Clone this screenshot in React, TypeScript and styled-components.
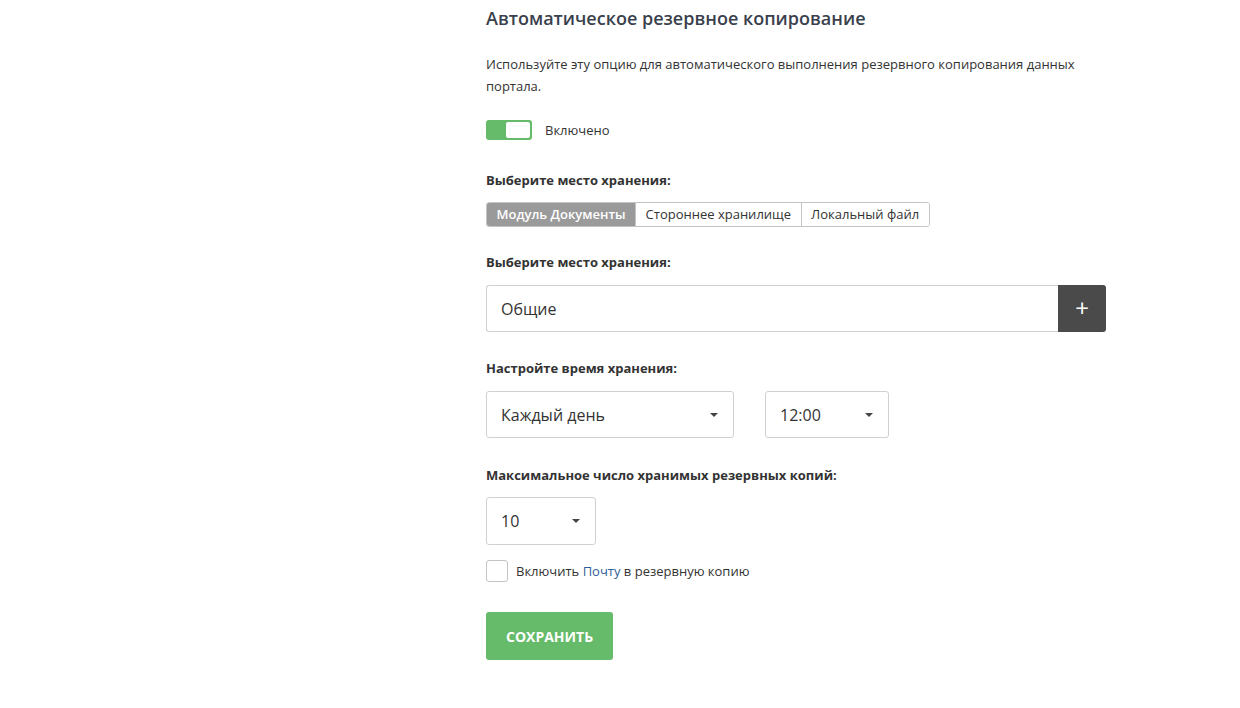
import React from "react";
import styled, { createGlobalStyle } from "styled-components";

const Global = createGlobalStyle`
  html, body { margin: 0; padding: 0; background: #fff; }
  body { font-family: "Open Sans", "Noto Sans", sans-serif; color: #333; }
  * { box-sizing: border-box; }
`;

const Page = styled.div`
  width: 1240px;
  height: 708px;
  padding: 6px 0 0 486px;
  overflow: hidden;
`;

const Column = styled.div`
  width: 620px;
  display: flex;
  flex-direction: column;
  align-items: flex-start;
`;

const Title = styled.h1`
  margin: 0;
  font-size: 18px;
  line-height: 24px;
  font-weight: 600;
  color: #3a3f4d;
`;

const Description = styled.p`
  margin: 23px 0 0;
  font-size: 13px;
  line-height: 22px;
  color: #333;
  width: 600px;
`;

const ToggleRow = styled.label`
  margin-top: 23px;
  display: flex;
  align-items: center;
  gap: 13px;
  font-size: 13px;
  line-height: 20px;
  color: #333;
`;

const Toggle = styled.span<{ $on: boolean }>`
  width: 46px;
  height: 20px;
  border-radius: 3px;
  background: ${(p) => (p.$on ? "#66bb6a" : "#ccc")};
  display: flex;
  justify-content: ${(p) => (p.$on ? "flex-end" : "flex-start")};
  padding: 2px;
`;

const Knob = styled.span`
  width: 24px;
  height: 16px;
  background: #fff;
  border-radius: 2px;
`;

const Label = styled.div<{ $top: number }>`
  margin-top: ${(p) => p.$top}px;
  font-size: 13px;
  line-height: 20px;
  font-weight: 700;
  color: #333;
`;

const Segmented = styled.div`
  margin-top: 12px;
  display: flex;
  border: 1px solid #c4c4c4;
  border-radius: 3px;
  overflow: hidden;
`;

const Segment = styled.button<{ $active?: boolean }>`
  height: 23px;
  padding: 0 9.5px;
  border: none;
  border-left: 1px solid ${(p) => (p.$active ? "#9a9a9a" : "#c4c4c4")};
  &:first-child { border-left: none; }
  background: ${(p) => (p.$active ? "#9a9a9a" : "#fff")};
  color: ${(p) => (p.$active ? "#fff" : "#333")};
  font-family: inherit;
  font-size: 13px;
  font-weight: ${(p) => (p.$active ? 600 : 400)};
  line-height: 23px;
  cursor: pointer;
`;

const InputGroup = styled.div`
  margin-top: 13px;
  width: 620px;
  display: flex;
  height: 47px;
`;

const TextField = styled.div`
  flex: 1;
  border: 1px solid #d1d1d1;
  border-right: none;
  border-radius: 3px 0 0 3px;
  padding: 0 14px;
  display: flex;
  align-items: center;
  font-size: 16px;
  color: #333;
`;

const AddButton = styled.button`
  width: 48px;
  border: none;
  background: #4a4a4a;
  border-radius: 0 3px 3px 0;
  color: #fff;
  font-size: 24px;
  font-weight: 400;
  font-family: inherit;
  display: flex;
  align-items: center;
  justify-content: center;
  padding: 0 0 3px;
`;

const SelectRow = styled.div<{ $top: number }>`
  margin-top: ${(p) => p.$top}px;
  display: flex;
  gap: 31px;
`;

const Select = styled.div<{ $w: number; $h?: number }>`
  width: ${(p) => p.$w}px;
  height: ${(p) => p.$h ?? 47}px;
  border: 1px solid #d1d1d1;
  border-radius: 3px;
  padding: 0 15px 0 14px;
  display: flex;
  align-items: center;
  justify-content: space-between;
  font-size: 16px;
  color: #333;
`;

const Caret = styled.span`
  width: 0;
  height: 0;
  border-left: 4px solid transparent;
  border-right: 4px solid transparent;
  border-top: 4px solid #444;
`;

const CheckRow = styled.label`
  margin-top: 15px;
  display: flex;
  align-items: center;
  gap: 8px;
  font-size: 13px;
  color: #333;
`;

const Checkbox = styled.span`
  width: 22px;
  height: 22px;
  border: 1px solid #c4c4c4;
  border-radius: 3px;
  background: #fff;
`;

const Link = styled.span`
  color: #2f5f94;
`;

const SaveButton = styled.button`
  margin-top: 30px;
  height: 48px;
  padding: 0 20px;
  border: none;
  border-radius: 3px;
  background: #66bb6a;
  color: #fff;
  font-family: inherit;
  font-size: 14px;
  font-weight: 700;
`;

export default function App() {
  return (
    <>
      <Global />
      <Page>
        <Column>
          <Title>Автоматическое резервное копирование</Title>
          <Description>
            Используйте эту опцию для автоматического выполнения резервного копирования данных портала.
          </Description>
          <ToggleRow>
            <Toggle $on>
              <Knob />
            </Toggle>
            Включено
          </ToggleRow>
          <Label $top={30}>Выберите место хранения:</Label>
          <Segmented>
            <Segment $active>Модуль Документы</Segment>
            <Segment>Стороннее хранилище</Segment>
            <Segment>Локальный файл</Segment>
          </Segmented>
          <Label $top={25}>Выберите место хранения:</Label>
          <InputGroup>
            <TextField>Общие</TextField>
            <AddButton>+</AddButton>
          </InputGroup>
          <Label $top={26}>Настройте время хранения:</Label>
          <SelectRow $top={13}>
            <Select $w={248}>
              Каждый день
              <Caret />
            </Select>
            <Select $w={124}>
              12:00
              <Caret />
            </Select>
          </SelectRow>
          <Label $top={27}>Максимальное число хранимых резервных копий:</Label>
          <SelectRow $top={12}>
            <Select $w={110} $h={48}>
              10
              <Caret />
            </Select>
          </SelectRow>
          <CheckRow>
            <Checkbox />
            <span>
              Включить <Link>Почту</Link> в резервную копию
            </span>
          </CheckRow>
          <SaveButton>СОХРАНИТЬ</SaveButton>
        </Column>
      </Page>
    </>
  );
}
